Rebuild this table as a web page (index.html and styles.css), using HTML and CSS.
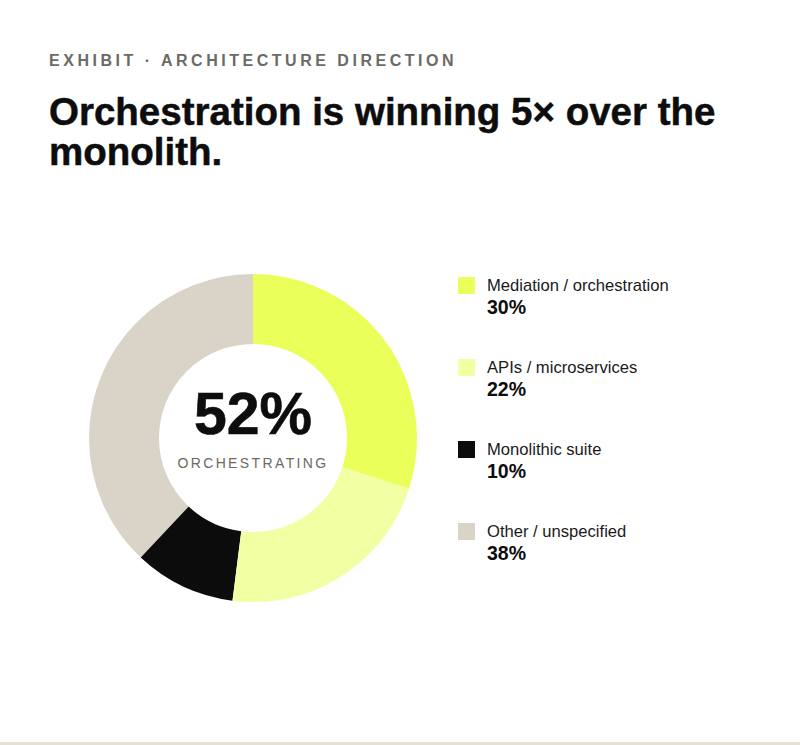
FILE: index.html
```html
<!DOCTYPE html>
<html lang="en">
<head>
<meta charset="utf-8">
<title>Exhibit · Architecture Direction</title>
<link rel="stylesheet" href="styles.css">
</head>
<body>
<main class="page">
  <p class="eyebrow">EXHIBIT · ARCHITECTURE DIRECTION</p>
  <h1 class="title">Orchestration is winning 5× over the monolith.</h1>
  <section class="chart">
    <div class="donut-cell">
      <div class="donut">
        <svg class="donut-svg" width="328" height="328" viewBox="0 0 328 328" aria-hidden="true">
          <g transform="rotate(-90 164 164)">
            <circle cx="164" cy="164" r="129" fill="none" stroke="#d9d4c7" stroke-width="70" pathLength="100" stroke-dasharray="38 62" stroke-dashoffset="-62"></circle>
            <circle cx="164" cy="164" r="129" fill="none" stroke="#0c0c0c" stroke-width="70" pathLength="100" stroke-dasharray="10 90" stroke-dashoffset="-52"></circle>
            <circle cx="164" cy="164" r="129" fill="none" stroke="#f2ffa3" stroke-width="70" pathLength="100" stroke-dasharray="22 78" stroke-dashoffset="-30"></circle>
            <circle cx="164" cy="164" r="129" fill="none" stroke="#eaff59" stroke-width="70" pathLength="100" stroke-dasharray="30 70" stroke-dashoffset="0"></circle>
          </g>
        </svg>
        <div class="donut-center">
          <div class="big">52%</div>
          <div class="big-label">ORCHESTRATING</div>
        </div>
      </div>
    </div>
    <ul class="legend">
      <li class="item">
        <span class="swatch sw-orch"></span>
        <div class="item-text">
          <div class="item-label">Mediation / orchestration</div>
          <div class="item-value">30%</div>
        </div>
      </li>
      <li class="item">
        <span class="swatch sw-api"></span>
        <div class="item-text">
          <div class="item-label">APIs / microservices</div>
          <div class="item-value">22%</div>
        </div>
      </li>
      <li class="item">
        <span class="swatch sw-mono"></span>
        <div class="item-text">
          <div class="item-label">Monolithic suite</div>
          <div class="item-value">10%</div>
        </div>
      </li>
      <li class="item">
        <span class="swatch sw-other"></span>
        <div class="item-text">
          <div class="item-label">Other / unspecified</div>
          <div class="item-value">38%</div>
        </div>
      </li>
    </ul>
  </section>
</main>
<div class="rule"></div>
</body>
</html>
```
FILE: styles.css
```css
* { box-sizing: border-box; }
html, body { margin: 0; padding: 0; background: #ffffff; }
body {
  font-family: "Liberation Sans", Arial, Helvetica, sans-serif;
  color: #0d0d0d;
}
.page {
  height: 742px;
  padding: 52px 49px 0 49px;
  overflow: hidden;
}
.eyebrow {
  margin: 0;
  font-size: 16px;
  line-height: 18px;
  font-weight: 700;
  letter-spacing: 0.22em;
  color: #6b6a63;
}
.title {
  margin: 22px 0 0 0;
  font-size: 38.5px;
  line-height: 40px;
  font-weight: 700;
  width: 700px;
  color: #0d0d0d;
  -webkit-text-stroke: 0.5px #0d0d0d;
}
.chart {
  margin-top: 102px;
  display: grid;
  grid-template-columns: 408px 1fr;
  align-items: start;
}
.donut-cell {
  display: flex;
  justify-content: center;
}
.donut {
  position: relative;
  width: 328px;
  height: 328px;
}
.donut-svg { display: block; }
.donut-center {
  position: absolute;
  inset: 0;
  display: flex;
  flex-direction: column;
  align-items: center;
  justify-content: center;
  padding-bottom: 20px;
}
.big {
  font-size: 59px;
  line-height: 58px;
  font-weight: 700;
  color: #0d0d0d;
  -webkit-text-stroke: 0.6px #0d0d0d;
}
.big-label {
  margin-top: 12px;
  font-size: 14px;
  line-height: 17px;
  letter-spacing: 0.17em;
  color: #6b6a63;
}
.legend {
  list-style: none;
  margin: 2px 0 0 1px;
  padding: 0;
  display: flex;
  flex-direction: column;
  gap: 40px;
}
.item {
  display: flex;
  align-items: flex-start;
  gap: 12px;
}
.swatch {
  flex: none;
  width: 17px;
  height: 17px;
  margin-top: 1px;
}
.sw-orch { background: #eaff59; }
.sw-api { background: #f2ffa3; }
.sw-mono { background: #0c0c0c; }
.sw-other { background: #d9d4c7; }
.item-label {
  font-size: 16.6px;
  line-height: 20px;
  color: #1a1a1a;
}
.item-value {
  font-size: 19.5px;
  line-height: 22px;
  font-weight: 700;
  color: #0d0d0d;
}
.rule {
  height: 3px;
  background: #e4e0d6;
}
```
